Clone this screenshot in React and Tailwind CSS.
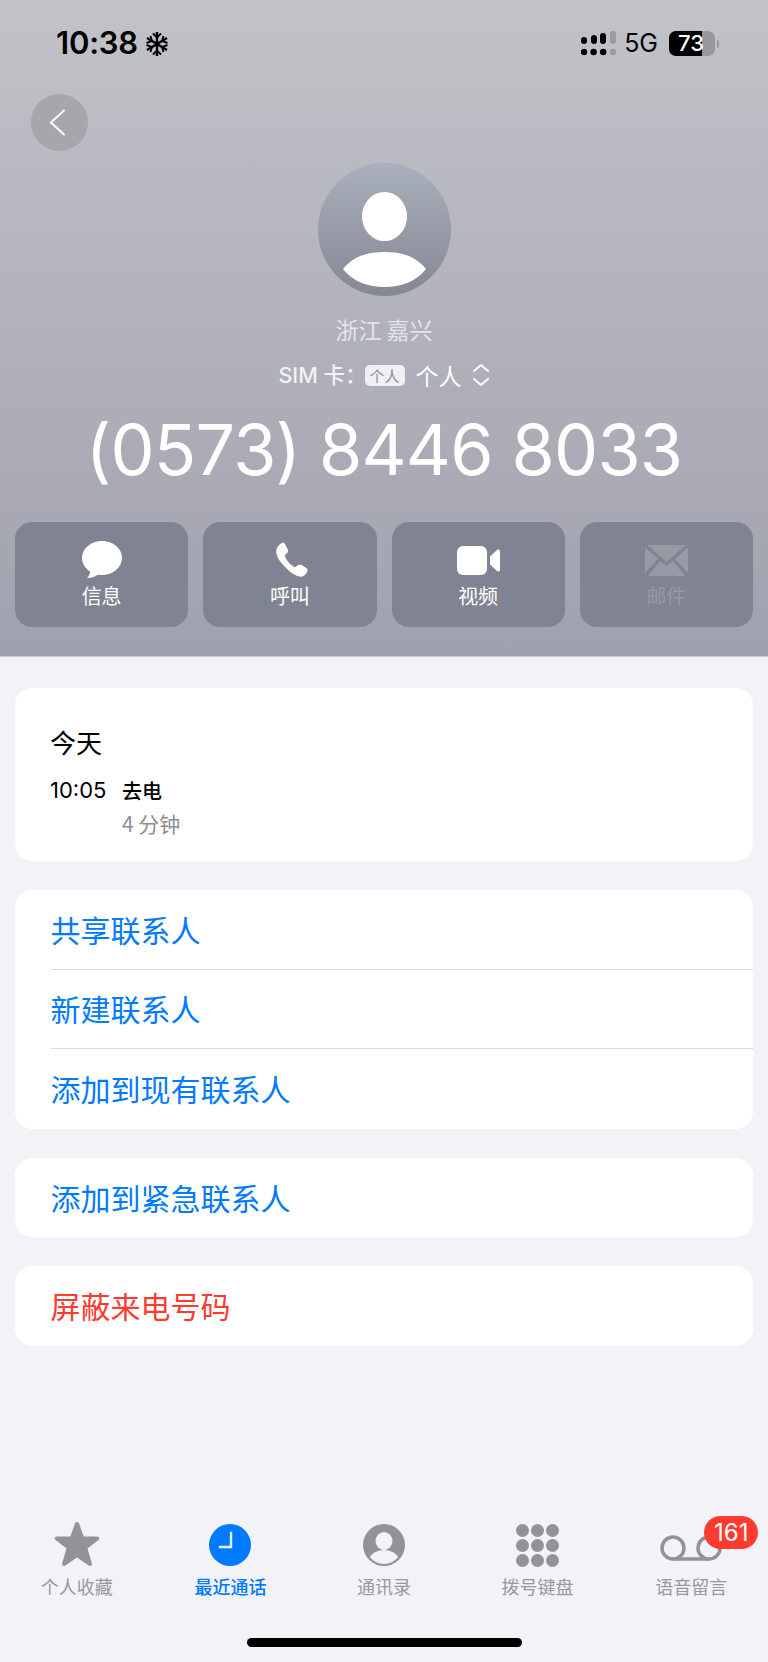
import React from 'react';

const cjk = '"Noto Sans CJK SC", sans-serif';

function Signal() {
    return (
        <svg width="36" height="26" viewBox="0 0 36 26" className="mr-[7px]">
            <rect x="0" y="6" width="6" height="7" rx="3" fill="#000" />
            <rect x="10" y="4" width="6" height="9" rx="3" fill="#000" />
            <rect x="19" y="2" width="6" height="11" rx="3" fill="#000" />
            <rect x="29" y="0" width="6" height="13" rx="3" fill="#9a9ba0" />
            {[0, 1, 2].map(i => <circle key={i} cx={3 + i * 9.6} cy="21" r="3.2" fill="#000" />)}
            <circle cx="32" cy="21" r="3.2" fill="#9a9ba0" />
        </svg>
    );
}

function Battery() {
    return (
        <div className="relative w-[46px] h-[25px] rounded-[7px] bg-[#97989c] overflow-hidden ml-[11px]">
            <div className="absolute left-0 top-0 bottom-0 w-[33px] bg-black" />
            <div className="absolute inset-0 flex items-center justify-center pr-[2px] text-white text-[22px] font-medium" style={{ fontFamily: 'Inter, sans-serif' }}>73</div>
        </div>
    );
}

function StatusBar() {
    return (
        <div className="flex items-center justify-between h-[26px] pl-[56px] pr-[49px] pt-[1px]">
            <div className="flex items-center text-black">
                <span className="text-[31px] font-semibold tracking-[-0.2px]" style={{ fontFamily: 'Inter, sans-serif' }}>10:38</span>
                <svg width="24" height="26" viewBox="0 0 24 26" className="ml-[7px]" stroke="#000" strokeWidth="2.4" fill="none">
                    <path d="M12 1v24M2 7l20 12M22 7L2 19" />
                    <path d="M8 2.5l4 4 4-4M8 23.5l4-4 4 4M1.5 12l5.5-2-1.5-5M22.5 12L17 10l1.5-5M1.5 14l5.5 2-1.5 5M22.5 14L17 16l1.5 5" strokeWidth="1.9" />
                </svg>
            </div>
            <div className="flex items-center">
                <Signal />
                <span className="text-[25px] text-black" style={{ fontFamily: 'Inter, sans-serif' }}>5G</span>
                <Battery />
                <div className="w-[2px] h-[8px] bg-[#97989c] rounded-r-full ml-[2px]" />
            </div>
        </div>
    );
}

function ActionButton({ label, icon, dim }) {
    return (
        <div className="h-[105px] rounded-[17px] bg-[#808391] flex flex-col items-center pt-[19px]">
            <div className="h-[38px] flex items-center justify-center">{icon}</div>
            <span className={`mt-[4px] text-[20px] leading-[26px] ${dim ? 'text-[#9799a5]' : 'text-white'}`}>{label}</span>
        </div>
    );
}

function Row({ label, color = 'text-[#007aff]', divider }) {
    return (
        <div className="pl-[36px]">
            <div className={`h-[79.5px] flex items-center text-[30px] -indent-[0.5px] ${color} ${divider ? 'border-b border-[#dcdce0]' : ''}`}>{label}</div>
        </div>
    );
}

function Tab({ label, icon, active }) {
    return (
        <div className="flex flex-col items-center">
            <div className="h-[46px] flex items-center justify-center relative">{icon}</div>
            <span className={`mt-[5px] text-[18px] leading-[26px] ${active ? 'text-[#007aff] font-medium' : 'text-[#98989e]'}`}>{label}</span>
        </div>
    );
}

const gray = '#929297';

export default function App() {
    return (
        <div className="w-[768px] h-[1662px] bg-[#f2f2f7] flex flex-col overflow-hidden" style={{ fontFamily: cjk }}>
            {/* header */}
            <div className="h-[657px] pt-[30px] bg-gradient-to-b from-[#c2c3c8] to-[#9fa1ae] border-b border-[#c9cad0]">
                <StatusBar />
                <div className="ml-[31px] mt-[38px] w-[57px] h-[57px] rounded-full bg-[#a6a7ac] flex items-center justify-center">
                    <svg width="17" height="27" viewBox="0 0 17 27" className="mr-[4px]" fill="none" stroke="#fff" strokeWidth="2" strokeLinecap="round" strokeLinejoin="round">
                        <path d="M15 1.5L2 13.5l13 12" />
                    </svg>
                </div>
                <div className="flex flex-col items-center mt-[12px]">
                    <div className="w-[133px] h-[133px] rounded-full bg-gradient-to-b from-[#aab0bd] to-[#858894] overflow-hidden">
                        <svg width="133" height="133" viewBox="0 0 133 133">
                            <ellipse cx="66.5" cy="53.5" rx="22.5" ry="24.5" fill="#fff" />
                            <path d="M25 106C36 92 52 89 66.5 89S97 92 108 106C98 119 82 124 66.5 124S35 119 25 106Z" fill="#fff" />
                        </svg>
                    </div>
                    <div className="mt-[18px] text-[23px] leading-[30px] text-[#e4e4e8]">浙江 嘉兴</div>
                    <div className="mt-[16px] h-[30px] flex items-center text-white">
                        <span className="text-[21.5px] font-medium text-[#f2f2f4]" style={{ fontFamily: 'Inter, "Noto Sans CJK SC", sans-serif' }}>SIM 卡：</span>
                        <span className="-ml-[2px] w-[40px] h-[21px] rounded-[5px] bg-[#f0f0f2] text-[#8d8f9b] text-[15px] leading-[21px] text-center">个人</span>
                        <span className="ml-[11px] text-[23px]">个人</span>
                        <svg width="18" height="24" viewBox="0 0 18 24" className="ml-[10px]" fill="none" stroke="#fff" strokeWidth="2" strokeLinecap="round" strokeLinejoin="round">
                            <path d="M2 8l7-6 7 6M2 16l7 6 7-6" />
                        </svg>
                    </div>
                    <div className="mt-[20px] text-[70px] leading-[80px] font-normal tracking-[-0.85px] text-white whitespace-nowrap" style={{ fontFamily: 'Inter, sans-serif' }}>(0573) 8446 8033</div>
                </div>
                <div className="grid grid-cols-4 gap-[15px] px-[15px] mt-[32px]">
                    <ActionButton label="信息" icon={
                        <svg width="40" height="38" viewBox="0 0 40 38" fill="#fff">
                            <ellipse cx="20" cy="17" rx="20" ry="17" />
                            <path d="M8 28c1 4-1 7-3 9 5 0 10-2 13-5z" />
                        </svg>
                    } />
                    <ActionButton label="呼叫" icon={
                        <svg width="38" height="38" viewBox="0 0 24 24" fill="#fff">
                            <path d="M6.6 1.4c.8-.5 1.8-.2 2.3.7l1.7 3.3c.4.8.2 1.6-.4 2.2L9 8.7c-.3.3-.4.7-.2 1.1.6 1.4 1.5 2.7 2.5 3.9 1 1.1 2.1 2 3.3 2.7.4.2.8.2 1.1-.1l1.4-1.1c.7-.5 1.6-.6 2.3-.1l2.9 2c.8.6 1 1.6.5 2.4-.8 1.4-2.1 3-3.8 3-2.8 0-7-2.5-10.5-6.6C4.1 11.7 2.8 7.6 3.5 5c.4-1.5 1.8-2.8 3.1-3.6z" />
                        </svg>
                    } />
                    <ActionButton label="视频" icon={
                        <svg width="43" height="29" viewBox="0 0 43 29" fill="#fff">
                            <rect x="0" y="0" width="30" height="29" rx="6" />
                            <path d="M33 10.5l7-6.5c1-.8 3-.4 3 1.2v18.600c0 1.600-2 2-3 1.200l-7-6.500z" />
                        </svg>
                    } />
                    <ActionButton label="邮件" dim icon={
                        <svg width="43" height="31" viewBox="0 0 43 31" fill="#9799a5">
                            <path d="M2 0h39L21.5 17z" />
                            <path d="M0 2v26l13-14zM43 2v26L30 14z" />
                            <path d="M3 31l12-15 6.5 5 6.5-5 12 15z" />
                        </svg>
                    } />
                </div>
            </div>

            {/* list */}
            <div className="px-[15px] pt-[31px] flex flex-col gap-[29px]">
                <div className="h-[173px] rounded-[17px] bg-white pl-[35px] pt-[36px]">
                    <div className="text-[26px] leading-[36px] text-black">今天</div>
                    <div className="flex mt-[14px]">
                        <span className="w-[72px] text-[22px] leading-[33px] text-black" style={{ fontFamily: 'Inter, sans-serif' }}>10:05</span>
                        <div>
                            <div className="text-[20px] leading-[33px] font-medium text-black">去电</div>
                            <div className="text-[21px] leading-[33px] text-[#8e8e93]">4 分钟</div>
                        </div>
                    </div>
                </div>
                <div className="rounded-[17px] bg-white overflow-hidden">
                    <Row label="共享联系人" divider />
                    <Row label="新建联系人" divider />
                    <Row label="添加到现有联系人" />
                </div>
                <div className="rounded-[17px] bg-white overflow-hidden">
                    <Row label="添加到紧急联系人" />
                </div>
                <div className="rounded-[17px] bg-white overflow-hidden">
                    <Row label="屏蔽来电号码" color="text-[#ff3b30]" />
                </div>
            </div>

            {/* tab bar */}
            <div className="mt-auto grid grid-cols-5 pb-[63px]">
                <Tab label="个人收藏" icon={
                    <svg width="46" height="46" viewBox="0 0 46 46" fill={gray}>
                        <path d="M23 0c1.2 0 1.9 1 2.3 2.2l4.4 12.3h13.2c2.6 0 3.3 2.2 1.5 3.6L33.5 26.5l4.3 14.7c.7 2.3-1.3 3.7-3 2.3L23 35.500l-11.800 8c-1.700 1.400-3.700 0-3-2.300l4.300-14.700L1.600 18.100C-.2 16.700.5 14.500 3.100 14.500h13.200l4.400-12.300C21.100 1 21.800 0 23 0z" />
                    </svg>
                } />
                <Tab label="最近通话" active icon={
                    <div className="w-[42px] h-[42px] rounded-full bg-[#007aff] flex items-center justify-center">
                        <svg width="42" height="42" viewBox="0 0 42 42" fill="none" stroke="#e8f1ff" strokeWidth="2.4" strokeLinecap="square">
                            <path d="M22 9v14H11" />
                        </svg>
                    </div>
                } />
                <Tab label="通讯录" icon={
                    <svg width="42" height="42" viewBox="0 0 42 42">
                        <circle cx="21" cy="21" r="21" fill={gray} />
                        <ellipse cx="21" cy="17" rx="8.5" ry="9" fill="#f2f2f7" />
                        <path d="M7 33c3-5 9-7 14-7s11 2 14 7c-3 4-8 7-14 7s-11-3-14-7z" fill="#f2f2f7" />
                    </svg>
                } />
                <Tab label="拨号键盘" icon={
                    <svg width="43" height="43" viewBox="0 0 43 43" fill={gray}>
                        {[6.5, 21.5, 36.5].map(cy => [6.5, 21.5, 36.5].map(cx => (
                            <circle key={`${cx}-${cy}`} cx={cx} cy={cy} r="6.5" />
                        )))}
                    </svg>
                } />
                <Tab label="语音留言" icon={
                    <>
                        <svg width="62" height="28" viewBox="0 0 62 28" fill="none" stroke={gray} strokeWidth="3.5" className="mt-[6px]">
                            <circle cx="13" cy="14" r="11" />
                            <circle cx="49" cy="14" r="11" />
                            <path d="M13 25h36" />
                        </svg>
                        <div className="absolute -top-[6px] left-[44px] w-[54px] h-[33px] rounded-full bg-[#ff3b30] text-white text-[24px] leading-[33px] text-center" style={{ fontFamily: 'Inter, sans-serif' }}>161</div>
                    </>
                } />
            </div>
            <div className="absolute left-[247px] top-[1638px] w-[275px] h-[9px] rounded-full bg-black" />
        </div>
    );
}
